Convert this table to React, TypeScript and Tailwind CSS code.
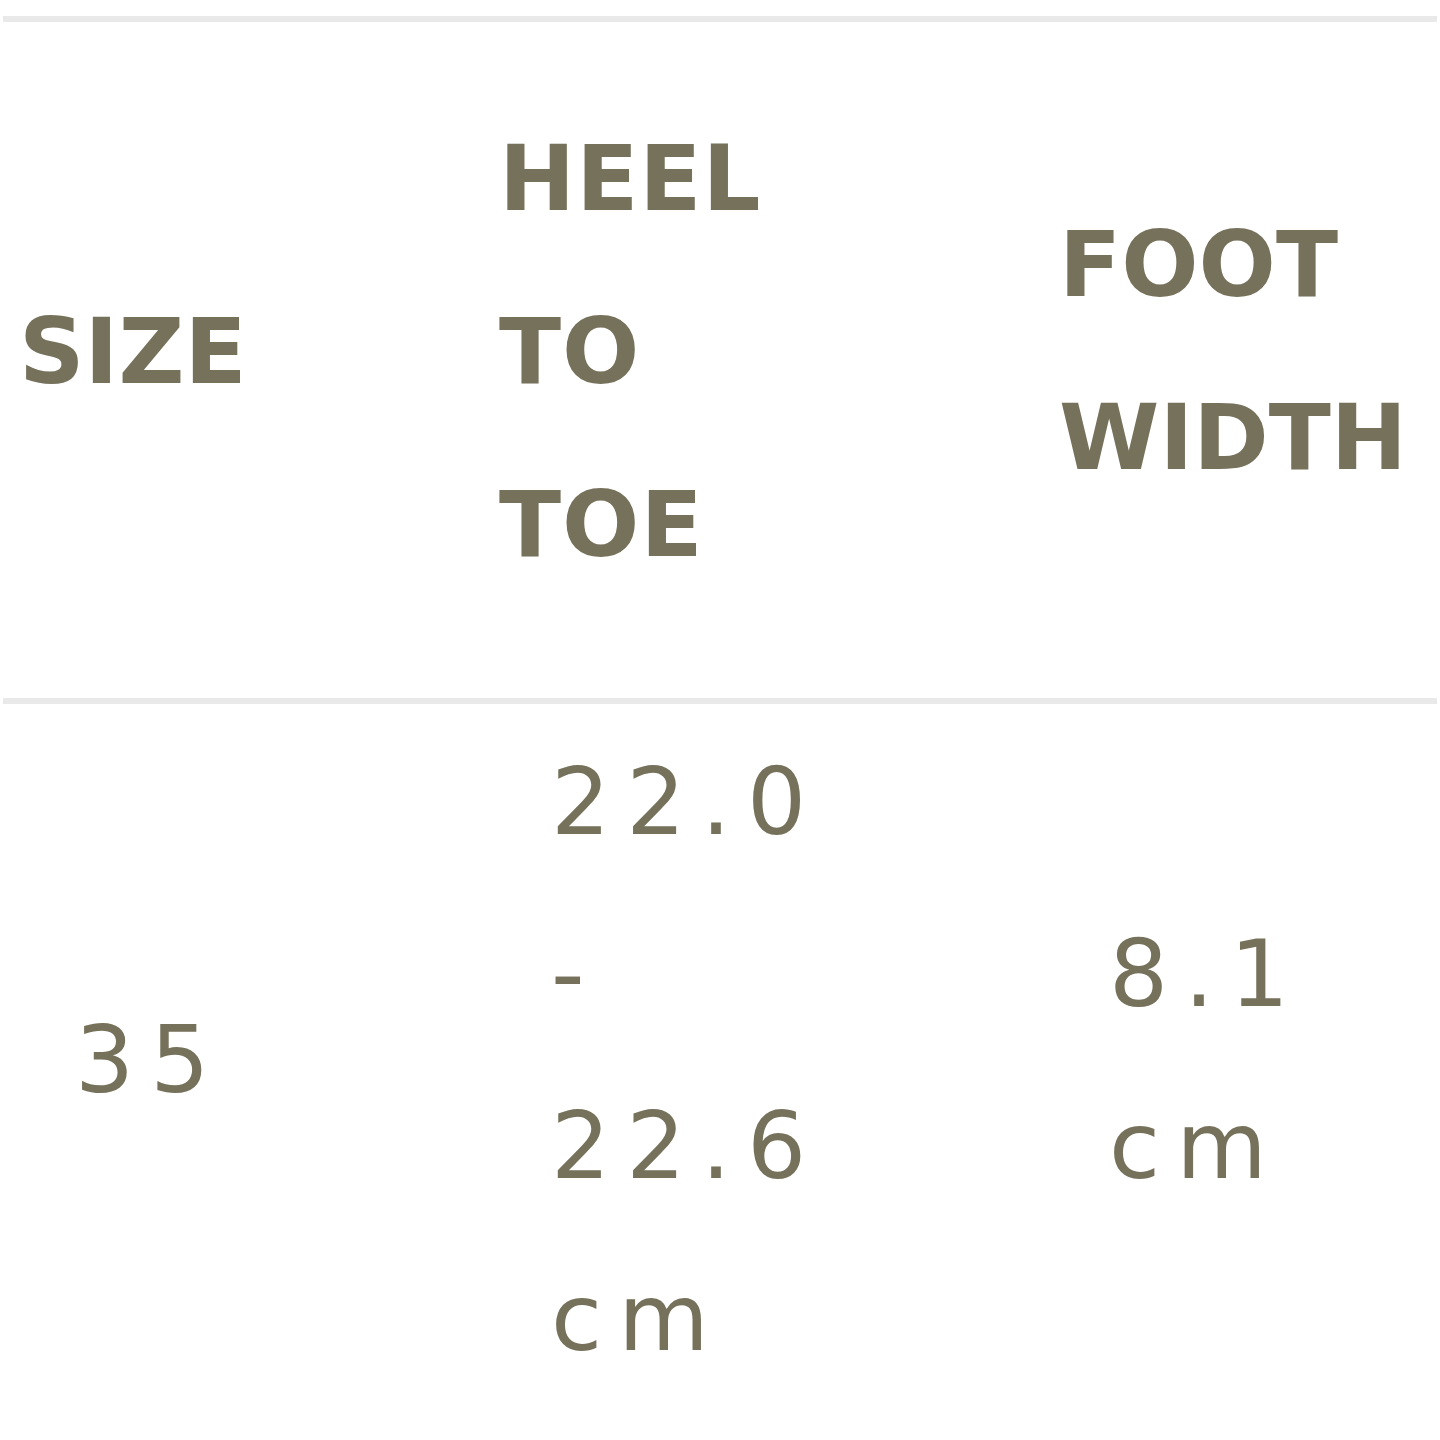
import React from 'react';

interface SizeRow {
  size: string;
  heelToToe: string[];
  footWidth: string[];
}

const rows: SizeRow[] = [
  { size: '35', heelToToe: ['22.0', '-', '22.6', 'cm'], footWidth: ['8.1', 'cm'] },
];

export default function App() {
  return (
    <div className="w-[1440px] h-[1440px] bg-white overflow-hidden pt-4 px-[3px] font-['DejaVu_Sans',sans-serif] text-[#76715b]">
      <table className="w-full table-fixed border-collapse">
        <colgroup>
          <col className="w-[475px]" />
          <col className="w-[563px]" />
          <col />
        </colgroup>
        <thead>
          <tr className="border-t-[6px] border-b-[6px] border-[#e9e9e9] h-[682px]">
            <th className="text-left align-middle pl-[16px] pb-[18px] text-[91px] leading-[173px] font-bold">SIZE</th>
            <th className="text-left align-middle pl-[21px] pb-[18px] text-[91px] leading-[173px] font-bold tracking-[1px]">
              <div>HEEL</div>
              <div>TO</div>
              <div>TOE</div>
            </th>
            <th className="text-left align-middle pl-[18px] pb-[18px] text-[91px] leading-[173px] font-bold">
              <div>FOOT</div>
              <div>WIDTH</div>
            </th>
          </tr>
        </thead>
        <tbody>
          {rows.map((row) => (
            <tr key={row.size} className="align-middle">
              <td className="pl-[72px] pt-[12px] text-[93px] leading-[172px] tracking-[16px]">{row.size}</td>
              <td className="pl-[73px] pt-[12px] text-[93px] leading-[172px] tracking-[16px]">
                {row.heelToToe.map((line, i) => (
                  <div key={i}>{line}</div>
                ))}
              </td>
              <td className="pl-[68px] pt-[12px] text-[93px] leading-[172px] tracking-[16px]">
                {row.footWidth.map((line, i) => (
                  <div key={i}>{line}</div>
                ))}
              </td>
            </tr>
          ))}
        </tbody>
      </table>
    </div>
  );
}
